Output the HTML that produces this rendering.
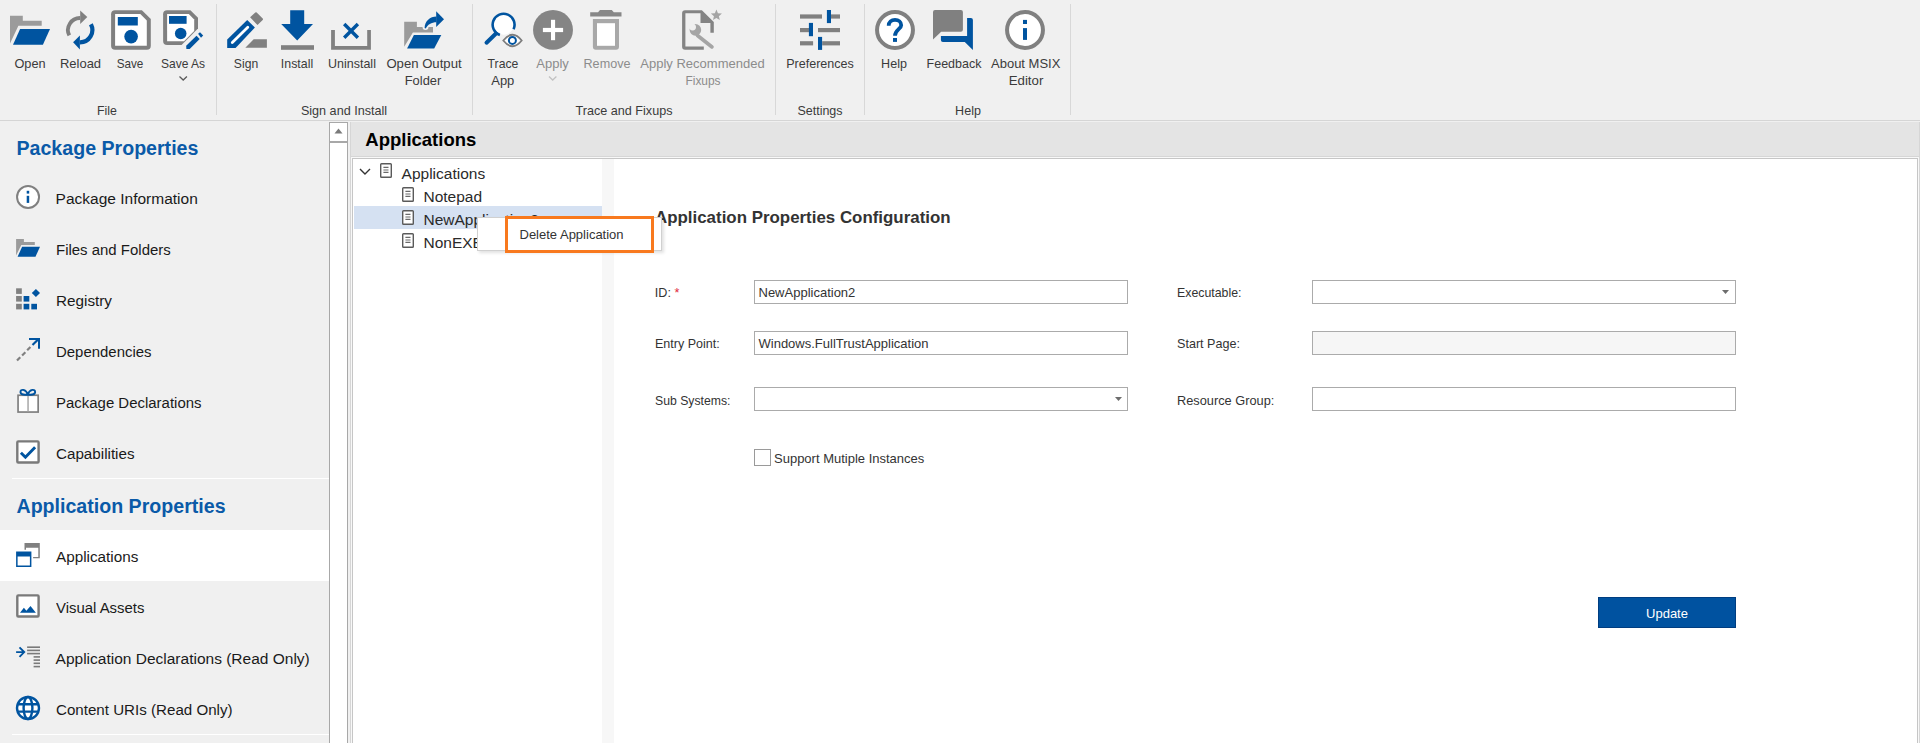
<!DOCTYPE html>
<html><head><meta charset="utf-8"><style>
html,body{margin:0;padding:0;width:1920px;height:743px;overflow:hidden;background:#f0f0f0;}
.r{position:absolute;}
.t{position:absolute;white-space:nowrap;line-height:1;font-family:"Liberation Sans",sans-serif;}
</style></head><body>
<div class="r" style="left:0px;top:0px;width:1920px;height:120px;background:#f0f0f0"></div>
<div class="r" style="left:0px;top:120px;width:1920px;height:1px;background:#d5d5d5"></div>
<div class="r" style="left:216px;top:4px;width:1px;height:111px;background:#d8d8d8"></div>
<div class="r" style="left:472px;top:4px;width:1px;height:111px;background:#d8d8d8"></div>
<div class="r" style="left:775px;top:4px;width:1px;height:111px;background:#d8d8d8"></div>
<div class="r" style="left:864px;top:4px;width:1px;height:111px;background:#d8d8d8"></div>
<div class="r" style="left:1070px;top:4px;width:1px;height:111px;background:#d8d8d8"></div>
<div class="t" style="left:-70.00px;top:57.00px;width:200px;text-align:center;font-size:13px;color:#3b3b3b;font-weight:400;transform:scaleX(0.98);transform-origin:center;">Open</div>
<div class="t" style="left:-19.50px;top:57.00px;width:200px;text-align:center;font-size:13px;color:#3b3b3b;font-weight:400;">Reload</div>
<div class="t" style="left:30.30px;top:57.00px;width:200px;text-align:center;font-size:13px;color:#3b3b3b;font-weight:400;transform:scaleX(0.9);transform-origin:center;">Save</div>
<div class="t" style="left:83.40px;top:57.00px;width:200px;text-align:center;font-size:13px;color:#3b3b3b;font-weight:400;transform:scaleX(0.925);transform-origin:center;">Save As</div>
<div class="t" style="left:146.30px;top:57.00px;width:200px;text-align:center;font-size:13px;color:#3b3b3b;font-weight:400;transform:scaleX(0.935);transform-origin:center;">Sign</div>
<div class="t" style="left:196.50px;top:57.00px;width:200px;text-align:center;font-size:13px;color:#3b3b3b;font-weight:400;transform:scaleX(0.95);transform-origin:center;">Install</div>
<div class="t" style="left:252.00px;top:57.00px;width:200px;text-align:center;font-size:13px;color:#3b3b3b;font-weight:400;transform:scaleX(0.96);transform-origin:center;">Uninstall</div>
<div class="t" style="left:324.20px;top:57.00px;width:200px;text-align:center;font-size:13px;color:#3b3b3b;font-weight:400;transform:scaleX(1.01);transform-origin:center;">Open Output</div>
<div class="t" style="left:323.20px;top:74.00px;width:200px;text-align:center;font-size:13px;color:#3b3b3b;font-weight:400;transform:scaleX(0.99);transform-origin:center;">Folder</div>
<div class="t" style="left:403.20px;top:57.00px;width:200px;text-align:center;font-size:13px;color:#3b3b3b;font-weight:400;transform:scaleX(0.94);transform-origin:center;">Trace</div>
<div class="t" style="left:402.80px;top:74.00px;width:200px;text-align:center;font-size:13px;color:#3b3b3b;font-weight:400;">App</div>
<div class="t" style="left:452.60px;top:57.00px;width:200px;text-align:center;font-size:13px;color:#8c8c8c;font-weight:400;">Apply</div>
<div class="t" style="left:506.50px;top:57.00px;width:200px;text-align:center;font-size:13px;color:#8c8c8c;font-weight:400;transform:scaleX(0.97);transform-origin:center;">Remove</div>
<div class="t" style="left:602.50px;top:57.00px;width:200px;text-align:center;font-size:13px;color:#8c8c8c;font-weight:400;">Apply Recommended</div>
<div class="t" style="left:602.50px;top:74.00px;width:200px;text-align:center;font-size:13px;color:#8c8c8c;font-weight:400;transform:scaleX(0.915);transform-origin:center;">Fixups</div>
<div class="t" style="left:720.00px;top:57.00px;width:200px;text-align:center;font-size:13px;color:#3b3b3b;font-weight:400;transform:scaleX(0.965);transform-origin:center;">Preferences</div>
<div class="t" style="left:794.40px;top:57.00px;width:200px;text-align:center;font-size:13px;color:#3b3b3b;font-weight:400;transform:scaleX(0.965);transform-origin:center;">Help</div>
<div class="t" style="left:853.50px;top:57.00px;width:200px;text-align:center;font-size:13px;color:#3b3b3b;font-weight:400;transform:scaleX(0.96);transform-origin:center;">Feedback</div>
<div class="t" style="left:925.70px;top:57.00px;width:200px;text-align:center;font-size:13px;color:#3b3b3b;font-weight:400;">About MSIX</div>
<div class="t" style="left:925.50px;top:74.00px;width:200px;text-align:center;font-size:13px;color:#3b3b3b;font-weight:400;transform:scaleX(1.02);transform-origin:center;">Editor</div>
<div class="t" style="left:7.00px;top:103.70px;width:200px;text-align:center;font-size:13px;color:#3b3b3b;font-weight:400;transform:scaleX(0.95);transform-origin:center;">File</div>
<div class="t" style="left:244.00px;top:103.70px;width:200px;text-align:center;font-size:13px;color:#3b3b3b;font-weight:400;transform:scaleX(0.97);transform-origin:center;">Sign and Install</div>
<div class="t" style="left:524.00px;top:103.70px;width:200px;text-align:center;font-size:13px;color:#3b3b3b;font-weight:400;transform:scaleX(0.97);transform-origin:center;">Trace and Fixups</div>
<div class="t" style="left:720.00px;top:103.70px;width:200px;text-align:center;font-size:13px;color:#3b3b3b;font-weight:400;transform:scaleX(0.96);transform-origin:center;">Settings</div>
<div class="t" style="left:867.50px;top:103.70px;width:200px;text-align:center;font-size:13px;color:#3b3b3b;font-weight:400;transform:scaleX(0.965);transform-origin:center;">Help</div>
<div class="r" style="left:0px;top:121px;width:329px;height:622px;background:#f0f0f0"></div>
<div class="r" style="left:0px;top:530px;width:329px;height:51px;background:#ffffff"></div>
<div class="r" style="left:12px;top:478px;width:317px;height:1px;background:#ffffff"></div>
<div class="r" style="left:12px;top:734px;width:317px;height:1px;background:#ffffff"></div>
<div class="t" style="left:16.50px;top:139.01px;font-size:19.6px;color:#0a5aa8;font-weight:700;">Package Properties</div>
<div class="t" style="left:16.50px;top:497.01px;font-size:19.6px;color:#0a5aa8;font-weight:700;">Application Properties</div>
<div class="t" style="left:55.60px;top:190.68px;font-size:15.5px;color:#1a1a1a;font-weight:400;">Package Information</div>
<div class="t" style="left:55.60px;top:241.68px;font-size:15.5px;color:#1a1a1a;font-weight:400;transform:scaleX(0.965);transform-origin:left;">Files and Folders</div>
<div class="t" style="left:55.60px;top:292.68px;font-size:15.5px;color:#1a1a1a;font-weight:400;transform:scaleX(0.985);transform-origin:left;">Registry</div>
<div class="t" style="left:55.60px;top:343.68px;font-size:15.5px;color:#1a1a1a;font-weight:400;transform:scaleX(0.964);transform-origin:left;">Dependencies</div>
<div class="t" style="left:55.60px;top:394.68px;font-size:15.5px;color:#1a1a1a;font-weight:400;transform:scaleX(0.965);transform-origin:left;">Package Declarations</div>
<div class="t" style="left:55.60px;top:445.68px;font-size:15.5px;color:#1a1a1a;font-weight:400;transform:scaleX(0.98);transform-origin:left;">Capabilities</div>
<div class="t" style="left:55.60px;top:548.88px;font-size:15.5px;color:#1a1a1a;font-weight:400;transform:scaleX(0.985);transform-origin:left;">Applications</div>
<div class="t" style="left:55.60px;top:599.88px;font-size:15.5px;color:#1a1a1a;font-weight:400;transform:scaleX(0.962);transform-origin:left;">Visual Assets</div>
<div class="t" style="left:55.60px;top:650.88px;font-size:15.5px;color:#1a1a1a;font-weight:400;">Application Declarations (Read Only)</div>
<div class="t" style="left:55.60px;top:701.88px;font-size:15.5px;color:#1a1a1a;font-weight:400;transform:scaleX(0.976);transform-origin:left;">Content URIs (Read Only)</div>
<div class="r" style="left:329px;top:122px;width:19px;height:621px;background:#fff;border:1px solid #a8a8a8;box-sizing:border-box;border-bottom:none"></div>
<div class="r" style="left:329px;top:141px;width:19px;height:2px;background:#a8a8a8"></div>
<svg class="r" style="left:334px;top:128px" width="9" height="6" viewBox="0 0 9 6"><path d="M0.5 5.5 L4.5 0.5 L8.5 5.5 Z" fill="#7a7a7a"/></svg>
<div class="r" style="left:348px;top:121px;width:1572px;height:622px;background:#f0f0f0"></div>
<div class="r" style="left:350px;top:122px;width:1570px;height:621px;background:#d6d6d6"></div>
<div class="r" style="left:351px;top:122px;width:1568px;height:34px;background:#e4e4e4"></div>
<div class="r" style="left:351px;top:157px;width:1568px;height:586px;background:#f8f8f8"></div>
<div class="t" style="left:365.30px;top:131.04px;font-size:18.5px;color:#000;font-weight:700;">Applications</div>
<div class="r" style="left:352px;top:158px;width:1566px;height:585px;background:#fff;border:1px solid #c6c6c6;box-sizing:border-box;border-bottom:none"></div>
<div class="r" style="left:602px;top:159px;width:12px;height:584px;background:#f7f7f7"></div>
<div class="r" style="left:354px;top:206px;width:248px;height:23px;background:#d5e1f2"></div>
<div class="t" style="left:401.60px;top:165.98px;font-size:15.5px;color:#2a2a2a;font-weight:400;">Applications</div>
<div class="t" style="left:423.50px;top:189.08px;font-size:15.5px;color:#2a2a2a;font-weight:400;">Notepad</div>
<div class="t" style="left:423.50px;top:211.98px;font-size:15.5px;color:#2a2a2a;font-weight:400;">NewApplication2</div>
<div class="t" style="left:423.50px;top:235.28px;font-size:15.5px;color:#2a2a2a;font-weight:400;">NonEXEApp</div>
<svg class="r" style="left:359px;top:168px" width="12" height="8" viewBox="0 0 12 8"><path d="M1 1 L6 6 L11 1" fill="none" stroke="#333" stroke-width="1.4"/></svg>
<svg class="r" style="left:380px;top:163.4px" width="12" height="15" viewBox="0 0 12 15"><rect x="0.7" y="0.7" width="10.6" height="13.6" rx="0.8" fill="#fff" stroke="#5a5a5a" stroke-width="1.4"/><path d="M3.4 4.4h5.1M3.4 7h5.1M3.4 9.4h5.1" stroke="#6a6a6a" stroke-width="1.1"/></svg>
<svg class="r" style="left:402px;top:186.6px" width="12" height="15" viewBox="0 0 12 15"><rect x="0.7" y="0.7" width="10.6" height="13.6" rx="0.8" fill="#fff" stroke="#5a5a5a" stroke-width="1.4"/><path d="M3.4 4.4h5.1M3.4 7h5.1M3.4 9.4h5.1" stroke="#6a6a6a" stroke-width="1.1"/></svg>
<svg class="r" style="left:402px;top:209.6px" width="12" height="15" viewBox="0 0 12 15"><rect x="0.7" y="0.7" width="10.6" height="13.6" rx="0.8" fill="#fff" stroke="#5a5a5a" stroke-width="1.4"/><path d="M3.4 4.4h5.1M3.4 7h5.1M3.4 9.4h5.1" stroke="#6a6a6a" stroke-width="1.1"/></svg>
<svg class="r" style="left:402px;top:232.6px" width="12" height="15" viewBox="0 0 12 15"><rect x="0.7" y="0.7" width="10.6" height="13.6" rx="0.8" fill="#fff" stroke="#5a5a5a" stroke-width="1.4"/><path d="M3.4 4.4h5.1M3.4 7h5.1M3.4 9.4h5.1" stroke="#6a6a6a" stroke-width="1.1"/></svg>
<div class="t" style="left:655.00px;top:210.19px;font-size:16.9px;color:#333;font-weight:700;">Application Properties Configuration</div>
<div class="t" style="left:654.80px;top:286.73px;font-size:12.6px;color:#333333;font-weight:400;">ID: <span style="color:#e0283c">*</span></div>
<div class="t" style="left:654.50px;top:338.33px;font-size:12.6px;color:#333333;font-weight:400;transform:scaleX(0.995);transform-origin:left;">Entry Point:</div>
<div class="t" style="left:654.50px;top:395.33px;font-size:12.6px;color:#333333;font-weight:400;transform:scaleX(0.972);transform-origin:left;">Sub Systems:</div>
<div class="t" style="left:1176.50px;top:286.73px;font-size:12.6px;color:#333333;font-weight:400;transform:scaleX(0.98);transform-origin:left;">Executable:</div>
<div class="t" style="left:1177.00px;top:338.03px;font-size:12.6px;color:#333333;font-weight:400;">Start Page:</div>
<div class="t" style="left:1176.50px;top:395.13px;font-size:12.6px;color:#333333;font-weight:400;transform:scaleX(1.015);transform-origin:left;">Resource Group:</div>
<div class="r" style="left:754px;top:280px;width:374px;height:24px;background:#fff;border:1px solid #ababab;box-sizing:border-box"></div>
<div class="t" style="left:758.50px;top:286.40px;font-size:13px;color:#333333;font-weight:400;">NewApplication2</div>
<div class="r" style="left:754px;top:331px;width:374px;height:24px;background:#fff;border:1px solid #ababab;box-sizing:border-box"></div>
<div class="t" style="left:758.50px;top:337.00px;font-size:13px;color:#333333;font-weight:400;">Windows.FullTrustApplication</div>
<div class="r" style="left:754px;top:387px;width:374px;height:24px;background:#fff;border:1px solid #ababab;box-sizing:border-box"></div>
<div class="r" style="left:1312px;top:280px;width:424px;height:24px;background:#fff;border:1px solid #ababab;box-sizing:border-box"></div>
<div class="r" style="left:1312px;top:331px;width:424px;height:24px;background:#f6f6f6;border:1px solid #ababab;box-sizing:border-box"></div>
<div class="r" style="left:1312px;top:387px;width:424px;height:24px;background:#fff;border:1px solid #ababab;box-sizing:border-box"></div>
<svg class="r" style="left:1115px;top:397px" width="7" height="4" viewBox="0 0 7 4"><path d="M0 0 H7 L3.5 4 Z" fill="#6d6d6d"/></svg>
<svg class="r" style="left:1722px;top:290px" width="7" height="4" viewBox="0 0 7 4"><path d="M0 0 H7 L3.5 4 Z" fill="#6d6d6d"/></svg>
<div class="r" style="left:754px;top:449px;width:17px;height:17px;background:#fff;border:1px solid #9a9a9a;box-sizing:border-box"></div>
<div class="t" style="left:774.00px;top:451.80px;font-size:13px;color:#333333;font-weight:400;">Support Mutiple Instances</div>
<div class="r" style="left:1598px;top:597px;width:138px;height:31px;background:#0052a0;border:1px solid #003d80;box-sizing:border-box"></div>
<div class="t" style="left:1598.00px;top:607.00px;width:138px;text-align:center;font-size:13px;color:#fff;font-weight:400;">Update</div>
<svg class="r" style="left:0;top:0" width="1920" height="743" viewBox="0 0 1920 743"><path d="M10,15.7 H22.8 V20.7 H41.7 V25.8 H18.4 L10,43.6 Z" fill="#9b9b9b"/><path d="M20.1,29 H50 L42.9,44.7 H13 Z" fill="#0054a0"/><path d="M69.3,35.45 A12,12 0 0 1 80.2,18" fill="none" stroke="#808080" stroke-width="3.8"/><path d="M80.2,10.4 L87.3,16.9 L80.2,24 Z" fill="#808080"/><path d="M90.9,24.2 A12.3,12.3 0 0 1 79.9,42.3" fill="none" stroke="#0054a0" stroke-width="4.2"/><path d="M79.9,35.6 L73.1,42.3 L79.9,49.4 Z" fill="#0054a0"/><path d="M115.1,10.2 H141.9 L150.8,19.1 V45.8 Q150.8,49.8 146.8,49.8 H115.1 Q111.1,49.8 111.1,45.8 V14.2 Q111.1,10.2 115.1,10.2 Z" fill="#808080"/><path d="M115.1,14.1 H140.3 L146.8,20.6 V45.7 H115.1 Z" fill="#fff"/><rect x="117.8" y="17" width="20" height="8.5" fill="#0054a0"/><circle cx="131.1" cy="36.6" r="6.8" fill="#0054a0"/><path d="M167.1,10.2 H190.4 L198,17.8 V28.6 L181.6,45.1 H167.1 Q163.1,45.1 163.1,41.1 V14.2 Q163.1,10.2 167.1,10.2 Z" fill="#808080"/><path d="M167.1,14.1 H188.8 L194.2,19.5 V31 L184,41.2 H167.1 Z" fill="#fff"/><rect x="169" y="16" width="17.6" height="7.8" fill="#0054a0"/><circle cx="180.7" cy="33.5" r="5.8" fill="#0054a0"/><path d="M186.2,45.7 L196.5,35.7 L199.7,38.9 L189.7,49 L186.4,49 Z" fill="#0054a0"/><path d="M198.1,33.8 L200,32.2 L203.2,35.5 L201,37.8 Z" fill="#0054a0"/><path d="M227.2,39.6 L247.2,19.9 L254.9,27.6 L235.6,47.9 H227.2 Z" fill="#0054a0"/><path d="M232.3,42.5 L247.8,27.3" stroke="#fff" stroke-width="2.8" stroke-linecap="round"/><path d="M250.1,17.3 L255.3,12.5 Q256,11.8 256.7,12.5 L262.7,18.5 Q263.4,19.2 262.7,19.9 L257.5,25.1 Z" fill="#808080"/><path d="M245.3,47.7 L253.7,39.3 H266.9 V47.7 Z" fill="#808080"/><path d="M290.2,10.2 H304.2 V24 H313 L297.2,40.4 L281.2,24 H290.2 Z" fill="#0054a0"/><rect x="281" y="45.2" width="33" height="4.6" fill="#808080"/><path d="M331.1,30 H334.9 V46 H367.2 V30 H370.9 V49.8 H331.1 Z" fill="#808080"/><path d="M344.2,24 L357.9,37.7 M357.9,24 L344.2,37.7" stroke="#0054a0" stroke-width="3.4"/><path d="M404.2,21.8 H416.9 V27 H422.5 A3,3 0 0 0 428.5,27 H433 V32.5 H412.9 L404.2,46.7 Z" fill="#9b9b9b"/><path d="M413.9,35.1 H441.3 L434.2,48.6 H407.1 Z" fill="#0054a0"/><path d="M424.6,28 C424.8,21 430,16.4 436.5,16.4 L436.5,22.2 C431.5,22.2 427.5,24.5 425.8,28.5 Z" fill="#0054a0"/><path d="M436.2,11.3 L444,19.2 L436.2,27.1 Z" fill="#0054a0"/><circle cx="503.6" cy="24.7" r="10" fill="#fff"/><path d="M513.57,29.22 A10.95,10.95 0 1 0 499.9,35.0" fill="none" stroke="#0054a0" stroke-width="2.6"/><path d="M486.5,42.7 L496,33.5" stroke="#0054a0" stroke-width="4" stroke-linecap="round"/><path d="M503.3,40.5 Q512.5,29 521.7,40.5 Q512.5,52 503.3,40.5 Z" fill="#fff" stroke="#7d7d7d" stroke-width="1.8"/><circle cx="512.4" cy="40.4" r="3.5" fill="#fff" stroke="#0054a0" stroke-width="2"/><circle cx="553" cy="29.9" r="19.95" fill="#858585"/><rect x="542.9" y="27.9" width="20.2" height="4.2" fill="#fff"/><rect x="551" y="19.8" width="4.1" height="20.4" fill="#fff"/><path d="M590.2,12.2 H598 L600,10 H611.8 L613.8,12.2 H621.5 V16.6 H590.2 Z" fill="#878787"/><path d="M592.9,19.1 H619 V46.7 Q619,49.7 616,49.7 H595.9 Q592.9,49.7 592.9,46.7 Z" fill="#a8a8a8"/><rect x="597" y="23.2" width="18" height="22.6" fill="#fff"/><path d="M685.1,10.2 H701.9 L713.8,22.1 V32.8 H710.4 V23.1 H700.5 V13.3 H685.4 V46.6 H703.8 V49.8 H685.1 Q682.1,49.8 682.1,46.8 V13.2 Q682.1,10.2 685.1,10.2 Z" fill="#848484"/><path d="M697.5,35.5 L712,47" stroke="#a5a5a5" stroke-width="3.6" stroke-linecap="round"/><circle cx="695.4" cy="29.9" r="5.8" fill="#a5a5a5"/><circle cx="692.6" cy="27.1" r="3.4" fill="#f0f0f0"/><path d="M716.40,9.60 L717.93,13.30 L721.92,13.61 L718.87,16.20 L719.81,20.09 L716.40,18.00 L712.99,20.09 L713.93,16.20 L710.88,13.61 L714.87,13.30 Z" fill="#a5a5a5"/><rect x="800" y="14.4" width="22" height="4.2" fill="#808080"/><rect x="831" y="14.4" width="9" height="4.2" fill="#808080"/><rect x="800" y="28" width="9" height="4.2" fill="#808080"/><rect x="818" y="28" width="22" height="4.2" fill="#808080"/><rect x="800" y="41.2" width="13.100000000000023" height="4.2" fill="#808080"/><rect x="822.2" y="41.2" width="17.799999999999955" height="4.2" fill="#808080"/><rect x="826.9" y="10" width="4.1" height="13.100000000000001" fill="#0054a0"/><rect x="808.9" y="22.9" width="4.1" height="13.300000000000004" fill="#0054a0"/><rect x="818" y="36.9" width="4.1" height="13.0" fill="#0054a0"/><circle cx="895" cy="30" r="17.95" fill="#fff" stroke="#808080" stroke-width="4"/><path d="M888.7,25.8 C888.7,22.2 891.5,19.9 895,19.9 C898.7,19.9 901.2,22.3 901.2,25.2 C901.2,29 895,29.6 895,35.8" fill="none" stroke="#0054a0" stroke-width="3.8"/><rect x="893" y="38" width="4" height="3.9" fill="#0054a0"/><path d="M935,10 H960.9 Q962.9,10 962.9,12 V29.8 Q962.9,31.8 960.9,31.8 H941.2 L933,39.6 V12 Q933,10 935,10 Z" fill="#808080"/><path d="M967.1,18 H970.9 Q972.9,18 972.9,20 V49.9 L964.8,41.9 H942.9 Q940.9,41.9 940.9,39.9 V36 H967.1 Z" fill="#0054a0"/><circle cx="1025" cy="30" r="17.95" fill="#fff" stroke="#808080" stroke-width="4"/><rect x="1023" y="19.9" width="4" height="4.1" fill="#0054a0"/><rect x="1023" y="28.1" width="4" height="11.8" fill="#0054a0"/><path d="M179.5,76.5 L183.2,80 L186.9,76.5" fill="none" stroke="#5a5a5a" stroke-width="1.3"/><path d="M549,76.5 L552.7,80 L556.4,76.5" fill="none" stroke="#c2c2c2" stroke-width="1.3"/><circle cx="28.05" cy="197" r="11" fill="#fff" stroke="#808080" stroke-width="2"/><rect x="26.7" y="190.8" width="2.5" height="2.8" fill="#0054a0"/><rect x="26.7" y="195.8" width="2.5" height="7.1" fill="#0054a0"/><path d="M16.1,239 H23.9 V242 H34.8 V245 H21.3 L16.1,255.4 Z" fill="#9b9b9b"/><path d="M22.1,246.8 H40 L35.5,256.7 H17.6 Z" fill="#0054a0"/><rect x="16.1" y="288.3" width="5.7" height="5.6" fill="#808080"/><rect x="16.1" y="296" width="5.7" height="5.6" fill="#808080"/><rect x="16.1" y="303.8" width="5.7" height="5.6" fill="#808080"/><rect x="23.6" y="296" width="5.7" height="5.6" fill="#0054a0"/><rect x="23.6" y="303.8" width="5.7" height="5.6" fill="#0054a0"/><rect x="31.3" y="303.8" width="5.7" height="5.6" fill="#0054a0"/><path d="M35.9,288.9 L40,293 L35.9,297.1 L31.8,293 Z" fill="#0054a0"/><path d="M17,360.5 L31.5,346" stroke="#808080" stroke-width="2.2" stroke-dasharray="4.6,2.6"/><path d="M32.5,345 L38.8,338.8" stroke="#0054a0" stroke-width="2.2"/><path d="M29,339 H39 V348.8" fill="none" stroke="#0054a0" stroke-width="2"/><rect x="18.05" y="395.25" width="20.1" height="16.8" fill="#fff" stroke="#808080" stroke-width="1.7"/><rect x="27.3" y="396" width="1.5" height="15.4" fill="#a8a8a8"/><path d="M27.8,394.5 C26,389 20,388.5 20.5,392.5 C21,395 24,395 27.8,394.5 C31.6,395 34.6,395 35.1,392.5 C35.6,388.5 29.6,389 27.8,394.5" fill="none" stroke="#0054a0" stroke-width="1.9"/><rect x="17.3" y="441.4" width="21.3" height="21.1" rx="1" fill="#fff" stroke="#7a7a7a" stroke-width="2.4"/><path d="M20.9,452.8 L25.4,457.3 L35.1,447.2" fill="none" stroke="#0054a0" stroke-width="2.9"/><path d="M24.5,543.1 H39.8 V558.3 H33.1 V557 H38.3 V547.8 H26 V549.7 H24.5 Z" fill="#808080"/><path d="M16.1,551.4 H31.4 V566.9 H16.1 Z M17.6,556.4 V565.4 H29.9 V556.4 Z" fill="#0054a0" fill-rule="evenodd"/><rect x="17.3" y="595.4" width="21.3" height="21.1" rx="1" fill="#fff" stroke="#7a7a7a" stroke-width="2.4"/><path d="M20,612.8 L23.9,607.8 L26.4,610.8 L30.5,605.9 L35.9,612.8 Z" fill="#0054a0"/><path d="M16.1,652.1 H24.5 M19.5,647.4 L24.2,652.1 L19.5,656.8" fill="none" stroke="#0054a0" stroke-width="1.9"/><rect x="27.1" y="646.4000000000001" width="12.9" height="1.6" fill="#7a7a7a"/><rect x="27.1" y="649.6" width="12.9" height="1.6" fill="#7a7a7a"/><rect x="27.1" y="652.8000000000001" width="12.9" height="1.6" fill="#7a7a7a"/><rect x="33.6" y="656.1" width="6.4" height="1.6" fill="#7a7a7a"/><rect x="33.6" y="659.3000000000001" width="6.4" height="1.6" fill="#7a7a7a"/><rect x="33.6" y="662.5" width="6.4" height="1.6" fill="#7a7a7a"/><rect x="33.6" y="665.8000000000001" width="6.4" height="1.6" fill="#7a7a7a"/><circle cx="28" cy="708" r="11" fill="#fff" stroke="#0054a0" stroke-width="2.4"/><ellipse cx="28" cy="708" rx="4.4" ry="11" fill="none" stroke="#0054a0" stroke-width="2.4"/><path d="M17,704.2 H39 M17,711.6 H39" stroke="#0054a0" stroke-width="2.4"/></svg>
<div class="r" style="left:477px;top:217px;width:185px;height:34px;background:#fff;border:1px solid #d0d0d0;box-sizing:border-box;box-shadow:2px 2px 3px rgba(0,0,0,0.12)"></div>
<div class="r" style="left:505px;top:216px;width:149px;height:37px;border:3px solid #f8791e;box-sizing:border-box"></div>
<div class="t" style="left:519.50px;top:228.00px;font-size:13px;color:#333;font-weight:400;">Delete Application</div>
</body></html>
